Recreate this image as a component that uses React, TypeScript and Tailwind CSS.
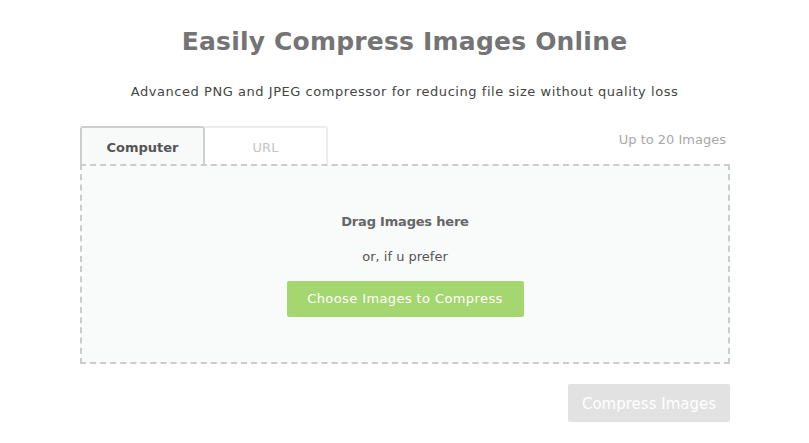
export default function App() {
  const font = { fontFamily: '"DejaVu Sans", "Liberation Sans", sans-serif' };
  return (
    <div className="w-[809px] h-[443px] bg-white overflow-hidden" style={font}>
      <div className="flex flex-col items-center pt-[26px]">
        <h1 className="text-[25px] leading-[32px] font-bold text-[#747474] tracking-[0.2px]">Easily Compress Images Online</h1>
        <p className="mt-[25px] text-[13px] leading-[18px] text-[#454545] tracking-[0.55px]">
          Advanced PNG and JPEG compressor for reducing file size without quality loss
        </p>
      </div>
      <div className="ml-[80px] mr-[79px] mt-[25px]">
        <div className="flex items-end justify-between">
          <div className="flex">
            <div className="w-[125px] h-[38px] pt-[3px] border-2 border-b-0 border-[#cfcfcf] rounded-t-[3px] bg-[#f8f9f9] flex items-center justify-center text-[13px] font-bold text-[#555]">
              Computer
            </div>
            <div className="w-[123px] h-[38px] pt-[3px] border-2 border-b-0 border-l-0 border-[#ececec] rounded-tr-[3px] bg-white flex items-center justify-center text-[13px] text-[#c4c4c4]">
              URL
            </div>
          </div>
          <div className="self-start mt-[4px] pr-[4px] text-[13px] text-[#a8a8a8]">Up to 20 Images</div>
        </div>
        <div className="h-[200px] border-2 border-dashed border-[#cccccc] bg-[#f9fafa] flex flex-col items-center pt-[46px]">
          <div className="text-[13px] font-bold text-[#666] tracking-[-0.2px]">Drag Images here</div>
          <div className="mt-[15px] text-[13px] text-[#555]">or, if u prefer</div>
          <button className="mt-[15px] w-[237px] h-[36px] bg-[#a5d770] rounded-[2px] text-white text-[13px] tracking-[0.4px]">
            Choose Images to Compress
          </button>
        </div>
        <div className="flex justify-end mt-[20px]">
          <button className="w-[162px] h-[38px] pt-[2px] bg-[#e2e2e2] rounded-[2px] text-white text-[15px]">
            Compress Images
          </button>
        </div>
      </div>
    </div>
  );
}
